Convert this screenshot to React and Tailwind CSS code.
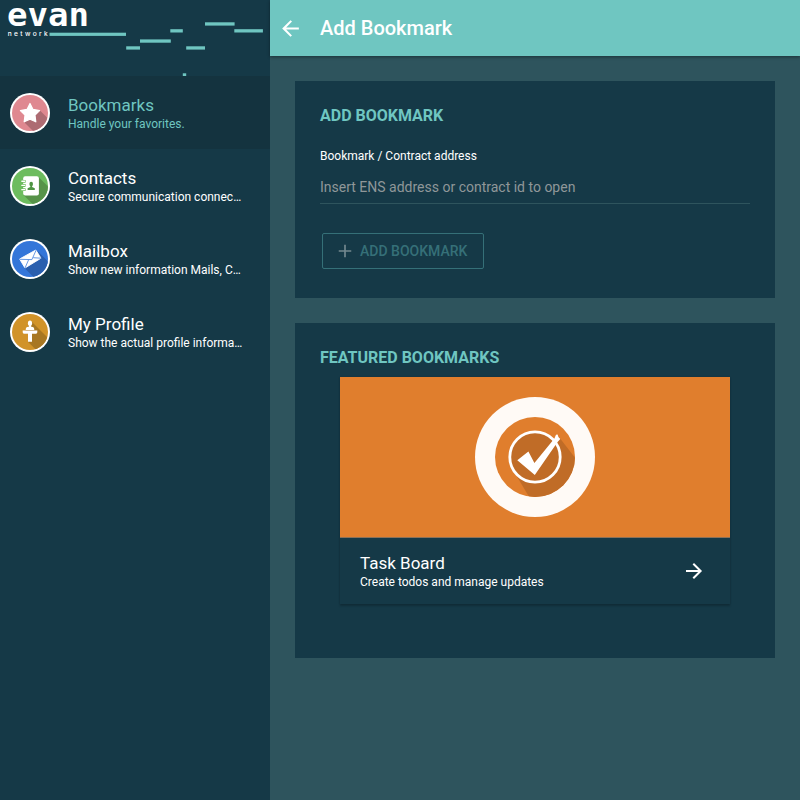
import { IoMdAdd, IoMdArrowBack, IoMdArrowForward } from 'react-icons/io';

function Badge({ id, color, shade, shadow, children }) {
  return (
    <svg viewBox="0 0 40 40" className="size-10 shrink-0">
      <defs>
        <clipPath id={id}>
          <circle cx="20" cy="20" r="18" />
        </clipPath>
      </defs>
      <circle cx="20" cy="20" r="20" fill="#fff" />
      <circle cx="20" cy="20" r="18" fill={color} />
      <path d={shadow} fill={shade} clipPath={`url(#${id})`} />
      {children}
    </svg>
  );
}

function StarBadge() {
  return (
    <Badge id="star" color="#df8890" shade="#ad6b72" shadow="M30 17.5L46 33.5V46H31L14.5 29.5Z">
      <path
        d="M20 10.5L23 16.4L29.6 17.6L25 22.2L25.8 28.8L20 26.2L14.2 28.8L15 22.2L10.4 17.6L17 16.4Z"
        fill="#fff"
        stroke="#fff"
        strokeWidth="1.2"
        strokeLinejoin="round"
      />
    </Badge>
  );
}

function ContactsBadge() {
  return (
    <Badge id="contacts" color="#6dbc5e" shade="#579349" shadow="M28.5 11L46 28.5V46H30.5L13.5 29Z">
      <rect x="13.2" y="10.2" width="15.7" height="19.4" rx="2" fill="#fff" />
      {[13.6, 17.8, 22].map((y) => (
        <g key={y}>
          <rect x="11.8" y={y + 0.3} width="4.2" height="2.8" rx="1.3" fill="#6dbc5e" />
          <rect x="11.2" y={y + 1} width="4.3" height="1.3" rx="0.6" fill="#fff" />
        </g>
      ))}
      <ellipse cx="21.2" cy="18" rx="1.8" ry="2.3" fill="#4e9443" />
      <path d="M20.3 19H22.1V21L24.8 22.3V24H17.6V22.3L20.3 21Z" fill="#4e9443" />
    </Badge>
  );
}

function MailBadge() {
  return (
    <Badge id="mail" color="#3476d9" shade="#2a5fae" shadow="M27.5 12L46 30.5V46H31.5L14.5 29Z">
      <path
        d="M9.6 20L25.8 11L31 19.2L15 29Z"
        fill="#fff"
        stroke="#fff"
        strokeWidth="0.9"
        strokeLinejoin="round"
      />
      <path d="M9.6 20.3L21.9 20.6L26.1 11.2M15 29L18.6 20.8M31.2 19.2L23.2 18.7" fill="none" stroke="#3476d9" strokeWidth="0.75" />
    </Badge>
  );
}

function ProfileBadge() {
  return (
    <Badge id="profile" color="#d19329" shade="#a87722" shadow="M21.5 9.5L46 34V46H34L18 29.7V22L13.5 21.5Z">
      <ellipse cx="20" cy="11.2" rx="2.1" ry="2.8" fill="#fff" />
      <path d="M19 13H21V14.5L23.4 15.3Q24.3 15.8 24.3 18H15.7Q15.7 15.8 16.6 15.3L19 14.5Z" fill="#fff" />
      <path d="M12.7 18.6H27.3V20.6L26.4 21.8H22V29.8H18V21.8H13.6L12.7 20.6Z" fill="#fff" />
    </Badge>
  );
}

function CheckLogo() {
  return (
    <svg viewBox="0 0 120 120" className="size-[120px]">
      <defs>
        <clipPath id="task">
          <circle cx="60" cy="60" r="40" />
        </clipPath>
      </defs>
      <circle cx="60" cy="60" r="60" fill="#fffaf6" />
      <circle cx="60" cy="60" r="40" fill="#e07e2d" />
      <path d="M84 40L104 66V104H56.5L40.5 77Z" fill="#c06c27" clipPath="url(#task)" />
      <circle cx="60" cy="60" r="25.2" fill="#c06c27" stroke="#fff" strokeWidth="2.8" />
      <path d="M42.3 63.3L53.4 54.4L59.4 66L79.4 41.6L81 37.8L82.6 37.4L83.4 40L85.3 42L82.6 45L59.8 78Z" fill="#fff" />
    </svg>
  );
}

function Logo() {
  return (
    <svg viewBox="0 0 270 76" className="h-[76px] w-[270px] shrink-0 overflow-visible">
      <text x="7" y="25.8" fontSize="32" fontWeight="700" fill="#fff" textLength="82" lengthAdjust="spacingAndGlyphs" className="font-['DejaVu_Sans_Mono',monospace]">
        evan
      </text>
      <text x="7.7" y="36" fontSize="6.6" fontWeight="500" fill="#fff" textLength="40" className="font-[Inter,sans-serif]">
        network
      </text>
      <g fill="#6fc6c1">
        <rect x="49.5" y="32.7" width="76.5" height="3.2" />
        <rect x="126.2" y="46.3" width="13.8" height="3.3" />
        <rect x="140" y="39.4" width="30.8" height="3.3" />
        <rect x="170.3" y="29.2" width="12.5" height="3.3" />
        <rect x="186.2" y="46.3" width="18.8" height="3.3" />
        <rect x="205" y="22.3" width="29.6" height="3.3" />
        <rect x="234.3" y="29.2" width="28.6" height="3.3" />
        <rect x="182.8" y="73.3" width="3.4" height="3.4" />
      </g>
    </svg>
  );
}

const items = [
  { title: 'Bookmarks', text: 'Handle your favorites.', icon: StarBadge, active: true },
  { title: 'Contacts', text: 'Secure communication connec…', icon: ContactsBadge },
  { title: 'Mailbox', text: 'Show new information Mails, C…', icon: MailBadge },
  { title: 'My Profile', text: 'Show the actual profile informa…', icon: ProfileBadge },
];

function Sidebar() {
  return (
    <aside className="flex w-[270px] shrink-0 flex-col bg-[#153947]">
      <Logo />
      <nav>
        {items.map(({ title, text, icon: Icon, active }) => (
          <a
            key={title}
            className={`flex h-[73px] items-center gap-[18px] pl-2.5 ${active ? 'bg-[#14333f] text-[#6fc6c1]' : 'text-white'}`}
          >
            <Icon />
            <span className="block pt-[3px] whitespace-nowrap">
              <span className="block text-[17px] leading-5">{title}</span>
              <span className="block text-xs leading-[18px]">{text}</span>
            </span>
          </a>
        ))}
      </nav>
    </aside>
  );
}

export default function App() {
  return (
    <div className="flex h-[800px] w-[800px] overflow-hidden bg-[#2e545d] font-[Roboto,sans-serif] text-white">
      <Sidebar />
      <div className="flex flex-1 flex-col">
        <header className="flex h-14 shrink-0 items-center bg-[#6fc6c1] pl-[7.5px] shadow-[0_1px_3px_rgba(0,0,0,0.4)]">
          <IoMdArrowBack className="size-[25px]" />
          <h1 className="ml-[17.5px] text-xl font-medium">Add Bookmark</h1>
        </header>
        <main className="flex flex-col gap-[25px] p-[25px]">
          <section className="h-[217px] bg-[#153947] px-[25px] pt-[23px]">
            <h2 className="text-base font-bold text-[#6fc6c1]">ADD BOOKMARK</h2>
            <label className="mt-5 block text-xs leading-4">Bookmark / Contract address</label>
            <div className="mt-[13px] h-[27px] border-b border-[#2e545d] text-sm text-[#8f9799]">
              Insert ENS address or contract id to open
            </div>
            <button className="mt-[29px] ml-0.5 flex h-9 w-[162px] items-center rounded-xs border border-[#357078] pl-3 text-sm font-medium text-[#357078]">
              <IoMdAdd className="mr-[5px] size-5 text-[#73888f]" />
              ADD BOOKMARK
            </button>
          </section>
          <section className="h-[335px] bg-[#153947] px-[25px] pt-[23px]">
            <h2 className="text-base font-bold text-[#6fc6c1]">FEATURED BOOKMARKS</h2>
            <article className="mx-5 mt-[7px] shadow-[0_2px_2px_rgba(0,0,0,0.2),0_0_2px_rgba(0,0,0,0.12)]">
              <div className="flex h-[161px] justify-center border-b border-[#8b7158] bg-[#e07e2d] pt-5">
                <CheckLogo />
              </div>
              <div className="flex h-[66px] items-center justify-between pr-6 pl-5">
                <div className="pt-px">
                  <h3 className="text-[17px] leading-5">Task Board</h3>
                  <p className="text-xs leading-[18px]">Create todos and manage updates</p>
                </div>
                <IoMdArrowForward className="size-6" />
              </div>
            </article>
          </section>
        </main>
      </div>
    </div>
  );
}
